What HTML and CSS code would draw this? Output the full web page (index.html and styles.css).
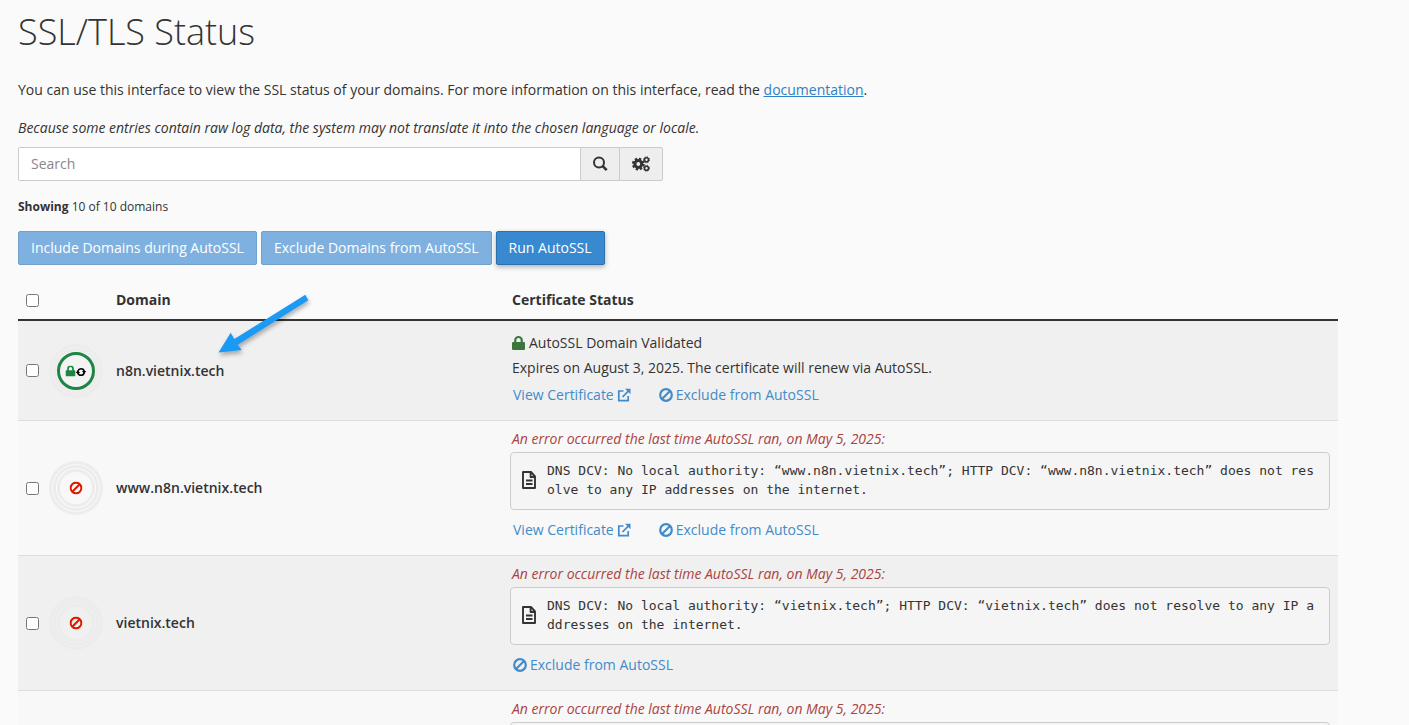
FILE: index.html
```html
<!DOCTYPE html>
<html lang="en">
<head>
<meta charset="utf-8">
<title>SSL/TLS Status</title>
<link rel="stylesheet" href="styles.css">
</head>
<body>
<svg class="sprite" aria-hidden="true">
  <symbol id="lock" viewBox="0 0 12 14" preserveAspectRatio="none"><path fill="currentColor" fill-rule="evenodd" d="M2 6V4a4 4 0 0 1 8 0v2h1a1 1 0 0 1 1 1v6a1 1 0 0 1-1 1H1a1 1 0 0 1-1-1V7a1 1 0 0 1 1-1zM4 6h4V4a2 2 0 0 0-4 0z"/></symbol>
  <symbol id="ban" viewBox="0 0 14 14"><g fill="none" stroke="currentColor" stroke-width="2.200"><circle cx="7" cy="7" r="5.800"/><path d="M3 11 11 3"/></g></symbol>
  <symbol id="external" viewBox="0 0 14 14"><g fill="none" stroke="currentColor" stroke-width="1.700"><path d="M6.500 3H1.800v9.700h9.400V8"/><path d="M5.500 9 12 2.400"/></g><path fill="currentColor" d="M8 .8h5.500v5.500z"/></symbol>
  <symbol id="file" viewBox="0 0 14 18"><g fill="none" stroke="currentColor" stroke-width="1.900" stroke-linejoin="round"><path d="M1 1h8l4 4.500V17H1z"/><path d="M8.600 1v5H13M4 9.500h6.500M4 13h6.500"/></g></symbol>
</svg>
<main class="page">
  <h1 class="title">SSL/TLS Status</h1>
  <p class="intro">You can use this interface to view the SSL status of your domains. For more information on this interface, read the <a href="#">documentation</a>.</p>
  <p class="note">Because some entries contain raw log data, the system may not translate it into the chosen language or locale.</p>
  <form class="search">
    <input class="search-input" type="text" placeholder="Search" aria-label="Search">
    <button class="search-btn" type="button" aria-label="Run search">
      <svg width="16" height="16" viewBox="0 0 16 16" fill="none" stroke="currentColor"><circle cx="7" cy="6.500" r="5" stroke-width="2"/><path d="m10.700 10.200 4 4" stroke-width="2.600"/></svg>
    </button>
    <button class="search-btn search-settings" type="button" aria-label="Search settings">
      <svg width="18" height="16" viewBox="0 0 18 16" fill="none" stroke="currentColor"><circle cx="6.300" cy="8" r="3.400" stroke-width="3"/><circle cx="6.300" cy="8" r="5.300" stroke-width="2.200" stroke-dasharray="2.400 1.760"/><circle cx="14.500" cy="3.800" r="2" stroke-width="1.600"/><circle cx="14.500" cy="3.800" r="3" stroke-width="1" stroke-dasharray="1.200 1.156"/><circle cx="14.500" cy="12.200" r="2" stroke-width="1.600"/><circle cx="14.500" cy="12.200" r="3" stroke-width="1" stroke-dasharray="1.200 1.156"/></svg>
    </button>
  </form>
  <p class="count"><strong>Showing</strong> 10 of 10 domains</p>
  <div class="actions">
    <button class="btn" type="button" disabled>Include Domains during AutoSSL</button>
    <button class="btn" type="button" disabled>Exclude Domains from AutoSSL</button>
    <button class="btn btn-raised" type="button">Run AutoSSL</button>
  </div>
  <table class="domains">
    <thead>
      <tr>
        <th class="col-check"><input class="check" type="checkbox" aria-label="Select all domains"></th>
        <th class="col-icon"></th>
        <th class="col-domain">Domain</th>
        <th><span class="status-line">Certificate Status</span></th>
      </tr>
    </thead>
    <tbody>
      <tr>
        <td><input class="check" type="checkbox" aria-label="Select n8n.vietnix.tech"></td>
        <td class="icon-cell">
          <svg class="rings" viewBox="0 0 54 54" fill="none"><g stroke="#ececec" stroke-width="2.800"><circle cx="27" cy="27" r="25.500"/><circle cx="27" cy="27" r="21.500"/></g><circle cx="27" cy="27" r="17.500" fill="#f3f3f3" stroke="#1f8545" stroke-width="3"/><use href="#lock" x="16.500" y="21.500" width="10" height="11" color="#1f8545"/><circle cx="32" cy="28" r="3.300" stroke="#000" stroke-width="1.600" stroke-dasharray="8.300 2.067" stroke-dashoffset="-1"/><path fill="#000" d="m26.800 29 4.200 0-2.100-3zM37.200 27l-4.200 0 2.100 3z"/></svg>
        </td>
        <td class="domain">n8n.vietnix.tech</td>
        <td class="status">
          <p class="status-line valid"><svg class="lock" width="13" height="14"><use href="#lock"/></svg>AutoSSL Domain Validated</p>
          <p class="status-line expiry">Expires on August 3, 2025. The certificate will renew via AutoSSL.</p>
          <div class="links valid-links">
            <a href="#">View Certificate<svg width="14" height="14"><use href="#external"/></svg></a>
            <a href="#"><svg width="14" height="14"><use href="#ban"/></svg>Exclude from AutoSSL</a>
          </div>
        </td>
      </tr>
      <tr>
        <td><input class="check" type="checkbox" aria-label="Select www.n8n.vietnix.tech"></td>
        <td class="icon-cell">
          <svg class="rings" viewBox="0 0 54 54" fill="none"><g stroke="#ececec" stroke-width="2.800"><circle cx="27" cy="27" r="25.500"/><circle cx="27" cy="27" r="21.500"/><circle cx="27" cy="27" r="17.500"/></g><use href="#ban" x="20.500" y="20.500" width="13" height="13" color="#dc1a00"/></svg>
        </td>
        <td class="domain">www.n8n.vietnix.tech</td>
        <td class="status">
          <p class="status-line error">An error occurred the last time AutoSSL ran, on May 5, 2025:</p>
          <div class="log"><svg width="14" height="18"><use href="#file"/></svg><code>DNS DCV: No local authority: “www.n8n.vietnix.tech”; HTTP DCV: “www.n8n.vietnix.tech” does not resolve to any IP addresses on the internet.</code></div>
          <div class="links">
            <a href="#">View Certificate<svg width="14" height="14"><use href="#external"/></svg></a>
            <a href="#"><svg width="14" height="14"><use href="#ban"/></svg>Exclude from AutoSSL</a>
          </div>
        </td>
      </tr>
      <tr>
        <td><input class="check" type="checkbox" aria-label="Select vietnix.tech"></td>
        <td class="icon-cell">
          <svg class="rings" viewBox="0 0 54 54" fill="none"><g stroke="#ececec" stroke-width="2.800"><circle cx="27" cy="27" r="25.500"/><circle cx="27" cy="27" r="21.500"/><circle cx="27" cy="27" r="17.500"/></g><use href="#ban" x="20.500" y="20.500" width="13" height="13" color="#dc1a00"/></svg>
        </td>
        <td class="domain">vietnix.tech</td>
        <td class="status">
          <p class="status-line error">An error occurred the last time AutoSSL ran, on May 5, 2025:</p>
          <div class="log"><svg width="14" height="18"><use href="#file"/></svg><code>DNS DCV: No local authority: “vietnix.tech”; HTTP DCV: “vietnix.tech” does not resolve to any IP addresses on the internet.</code></div>
          <div class="links">
            <a href="#"><svg width="14" height="14"><use href="#ban"/></svg>Exclude from AutoSSL</a>
          </div>
        </td>
      </tr>
      <tr>
        <td></td>
        <td></td>
        <td></td>
        <td class="status">
          <p class="status-line error">An error occurred the last time AutoSSL ran, on May 5, 2025:</p>
          <div class="log"></div>
        </td>
      </tr>
    </tbody>
  </table>
</main>
<svg class="pointer" width="110" height="76" viewBox="210 290 110 76" aria-hidden="true"><path fill="#1b9af5" d="M218.500 352.500 230.700 332.700 234.300 339 305.300 294.700 308.300 300.300 237.700 344.700 241.700 350z"/></svg>
</body>
</html>
```
FILE: styles.css
```css
* {
  box-sizing: border-box;
}

body {
  margin: 0;
  height: 100vh;
  overflow: hidden;
  position: relative;
  background: #fafafa;
  color: #333;
  font: 14px/20px "Open Sans", sans-serif;
}

h1,
p {
  margin: 0;
}

a {
  color: #428bca;
}

.sprite {
  position: absolute;
  width: 0;
  height: 0;
}

.page {
  padding: 12px 71px 0 18px;
}

.title {
  font-size: 36px;
  font-weight: 300;
  line-height: 40px;
}

.intro {
  margin-top: 28px;
}

.intro a {
  color: #2f80c2;
}

.note {
  margin-top: 18px;
  font-style: italic;
}

.search {
  display: flex;
  max-width: 645px;
  height: 34px;
  margin-top: 9px;
}

.search-input {
  flex: 1;
  min-width: 0;
  padding: 6px 12px;
  border: 1px solid #ccc;
  border-radius: 2px 0 0 2px;
  background: #fff;
  color: #333;
  font: inherit;
}

.search-input::placeholder {
  color: #888;
  opacity: 1;
}

.search-btn {
  display: flex;
  align-items: center;
  justify-content: center;
  width: 40px;
  margin-left: -1px;
  padding: 0;
  border: 1px solid #ccc;
  background: #eee;
  color: #333;
}

.search-settings {
  width: 44px;
  border-radius: 0 2px 2px 0;
}

.count {
  margin-top: 16px;
  font-size: 12px;
}

.actions {
  display: flex;
  gap: 4px;
  margin-top: 14px;
}

.btn {
  padding: 6px 12px;
  border: 1px solid #2a71b0;
  border-radius: 2px;
  background: #3889cf;
  color: #fff;
  font: inherit;
}

.btn:disabled {
  border-color: #70a0cc;
  background: #7eb1df;
}

.btn-raised {
  box-shadow: 0 2px 5px rgba(0, 0, 0, 0.3);
}

.domains {
  width: 100%;
  margin-top: 17px;
  border-spacing: 0;
  table-layout: fixed;
}

th {
  padding: 8px 8px 9px;
  border-bottom: 2px solid #333;
  font-weight: 700;
  text-align: left;
}

td {
  padding: 8px;
  border-bottom: 1px solid #ddd;
  background: #f8f8f8;
}

tbody tr:nth-child(odd) td {
  background: #f0f0f0;
}

.col-check {
  width: 31px;
}

.col-icon {
  width: 59px;
}

.col-domain {
  width: 394px;
}

.check {
  display: block;
  width: 13px;
  height: 13px;
  margin: 0;
}

.icon-cell {
  padding: 0;
}

.rings {
  display: block;
  width: 54px;
  height: 54px;
}

.domain {
  font-weight: 600;
}

.status {
  vertical-align: top;
}

.status-line {
  padding-left: 2px;
}

.valid {
  display: flex;
  align-items: center;
  gap: 4px;
  margin-top: 4px;
}

.lock {
  color: #3c763d;
}

.expiry {
  margin-top: 5px;
}

.error {
  color: #a94442;
  font-style: italic;
}

.log {
  display: flex;
  align-items: center;
  gap: 11px;
  min-height: 58px;
  margin-top: 3px;
  padding: 8px 10px 10px 11px;
  border: 1px solid #ccc;
  border-radius: 4px;
  background: #f5f5f5;
}

.log svg {
  flex: none;
}

.log code {
  font: 13px/19px "DejaVu Sans Mono", monospace;
  word-break: break-all;
}

.links {
  display: flex;
  gap: 28px;
  margin: 10px 0 7px;
  padding-left: 3px;
}

.valid-links {
  margin-top: 7px;
}

.links a {
  display: flex;
  align-items: center;
  gap: 3px;
  text-decoration: none;
}

.pointer {
  position: absolute;
  top: 290px;
  left: 210px;
  filter: drop-shadow(1px 3px 2px rgba(0, 0, 0, 0.3));
}
```
